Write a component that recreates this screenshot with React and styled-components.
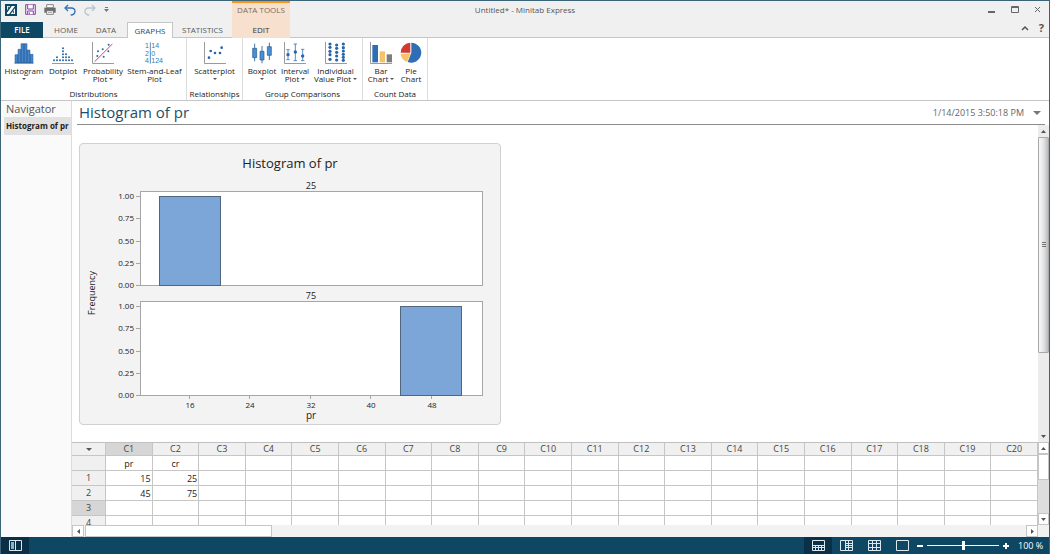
import React, { useState } from 'react';
import styled, { createGlobalStyle, css } from 'styled-components';

const GlobalStyle = createGlobalStyle`
  * {
    box-sizing: border-box;
  }

  body {
    margin: 0;
    font-family: 'Open Sans', 'Noto Sans', sans-serif;
    font-size: 9px;
    color: #222;
  }

  button {
    margin: 0;
    padding: 0;
    border: none;
    background: none;
    color: inherit;
    font: inherit;
    cursor: pointer;
  }

  svg {
    display: block;
  }
`;

const Window = styled.div`
  min-height: 100vh;
  display: flex;
  flex-direction: column;
  border: 1px solid #3c6478;
  border-bottom: none;
  background: white;
`;

const Header = styled.header`
  background: #f0f0f0;
`;

const TitleBar = styled.div`
  height: 21px;
  display: grid;
  grid-template-columns: 289px 1fr 289px;
`;

const TitleStart = styled.div`
  display: flex;
  justify-content: space-between;
`;

const QuickAccess = styled.div`
  display: flex;
  align-items: center;
  gap: 8px;
  padding: 0 4px 4px;
`;

const ContextLabel = styled.div`
  width: 58px;
  border-top: 2px solid #f7931e;
  background: #f8e0cf;
  color: #7d6a58;
  font-size: 8px;
  line-height: 14px;
  text-align: center;
  white-space: nowrap;
`;

const WindowTitle = styled.div`
  font-size: 8px;
  line-height: 17px;
  color: #555;
  text-align: center;
`;

const WindowButtons = styled.div`
  display: flex;
  justify-content: flex-end;
  align-items: center;
  gap: 14px;
  padding: 0 7px 4px 0;
`;

const TabBar = styled.div`
  height: 16px;
  display: flex;
  border-bottom: 1px solid #c6c6c6;
`;

const tabVariants = {
  file: css`
    background: #0d4763;
    color: white;
    font-weight: 600;
  `,
  active: css`
    background: white;
    border: 1px solid #c6c6c6;
    border-bottom: none;
    line-height: 13px;
    color: #1c4f6b;
  `,
  context: css`
    background: #f8e0cf;
    color: #333;
  `
};

const Tab = styled.button`
  width: ${props => props.$width}px;
  height: 16px;
  margin-left: ${props => (props.$variant === 'active' ? 4 : 0)}px;
  font-size: 8px;
  line-height: 14px;
  color: #5a5a5a;
  ${props => tabVariants[props.$variant]}
`;

const TabBarEnd = styled.div`
  display: flex;
  align-items: center;
  gap: 10px;
  margin-left: auto;
  padding: 0 5px 3px 0;
  color: #555;
  font-size: 11px;
  font-weight: 700;
  line-height: 12px;
`;

const Ribbon = styled.div`
  height: 63px;
  display: flex;
  border-bottom: 1px solid #c6c6c6;
  background: white;
`;

const Group = styled.section`
  display: flex;
  flex-direction: column;
  justify-content: space-between;
  padding: 4px 2px 0;
  border-right: 1px solid #dcdcdc;
`;

const GroupTools = styled.div`
  display: flex;
  justify-content: center;
`;

const GroupLabel = styled.div`
  font-size: 8px;
  line-height: 13px;
  text-align: center;
  white-space: nowrap;
`;

const ToolButton = styled.button`
  width: ${props => props.$width}px;
  display: flex;
  flex-direction: column;
  align-items: center;
  font-size: 8px;
  line-height: 8px;
  white-space: nowrap;
`;

const ToolLabel = styled.span`
  margin-top: 3px;
`;

const LabelLine = styled.span`
  height: 8px;
  display: flex;
  justify-content: center;
  align-items: center;
  gap: 2px;
`;

const Caret = styled.span`
  border: ${props => props.$size || 2}px solid transparent;
  border-top-color: ${props => props.$color || '#555'};
  border-bottom: none;
`;

const Workspace = styled.div`
  flex: 1;
  display: flex;
  min-height: 0;
`;

const Navigator = styled.nav`
  flex: 0 0 71px;
  border-right: 1px solid #dcdcdc;
  background: #fafafa;
`;

const NavTitle = styled.div`
  padding-left: 5px;
  font-size: 11px;
  line-height: 16px;
  color: #555;
`;

const NavItem = styled.button`
  width: 67px;
  height: 18px;
  margin-left: 3px;
  padding: 0 0 2px 2px;
  background: #e1e1e1;
  font-size: 8px;
  font-weight: 700;
  text-align: left;
  white-space: nowrap;
`;

const Content = styled.main`
  flex: 1;
  min-width: 0;
  display: flex;
  flex-direction: column;
`;

const OutputHeader = styled.div`
  height: 24px;
  display: flex;
  justify-content: space-between;
  align-items: center;
  margin: 0 4px 0 5px;
  padding: 0 4px 0 2px;
  border-bottom: 1px solid #8c8c8c;
`;

const OutputTitle = styled.h1`
  margin: 0;
  font-size: 15px;
  font-weight: 400;
  line-height: 23px;
  color: #1c4f6b;
`;

const OutputDate = styled.button`
  display: flex;
  align-items: center;
  gap: 9px;
  font-size: 9px;
  color: #666;
`;

const OutputArea = styled.div`
  flex: 1;
  display: flex;
  justify-content: space-between;
`;

const GraphCard = styled.figure`
  align-self: flex-start;
  margin: 18px 7px 17px;
  border: 1px solid #d0d0d0;
  border-radius: 4px;
  background: #f3f3f3;
`;

const VerticalScroll = styled.div`
  flex: 0 0 11px;
  display: flex;
  flex-direction: column;
  background: ${props => props.$track || '#ececec'};
`;

const ScrollButton = styled.button`
  flex: 0 0 12px;
  display: flex;
  justify-content: center;
  align-items: center;
  border: ${props => (props.$framed ? '1px solid #c6c6c6' : 'none')};
  background: ${props => (props.$framed ? 'white' : 'none')};
`;

const OutputThumb = styled.div`
  flex: 0 0 68%;
  display: flex;
  justify-content: center;
  align-items: center;
  margin-bottom: auto;
  border: 1px solid #a8a8a8;
  border-radius: 1px;
  background: linear-gradient(to right, #f8f8f8, #e4e4e4 50%, #b8bcc0);
`;

const Grip = styled.div`
  width: 4px;
  height: 5px;
  background: repeating-linear-gradient(#777 0 1px, transparent 1px 2px);
`;

const Worksheet = styled.section`
  display: grid;
  grid-template-columns: 1fr 11px;
  grid-template-rows: 83px 12px;
`;

const SheetClip = styled.div`
  overflow: hidden;
`;

const SheetTable = styled.table`
  width: 100%;
  table-layout: fixed;
  border-collapse: separate;
  border-spacing: 0;
  border-top: 1px solid #c0c0c0;
  font-size: 9px;
`;

const cellBase = css`
  height: 15px;
  padding: 0;
  border-right: 1px solid #c6c6c6;
  border-bottom: 1px solid #c6c6c6;
  line-height: 13px;
`;

const HeadCell = styled.th`
  ${cellBase}
  width: ${props => (props.$corner ? '34px' : 'auto')};
  height: ${props => (props.scope === 'col' ? 13 : 15)}px;
  background: ${props => (props.$selected ? '#d6d6d6' : '#f0f0f0')};
  color: #444;
  font-weight: 400;
  line-height: 12px;
`;

const Cell = styled.td`
  ${cellBase}
  padding-right: ${props => (props.$name ? 0 : 1)}px;
  text-align: ${props => (props.$name ? 'center' : 'right')};
`;

const CornerButton = styled.button`
  width: 100%;
  display: flex;
  justify-content: center;
`;

const SheetThumb = styled.div`
  height: 26px;
  margin-bottom: auto;
  border: 1px solid #c6c6c6;
  background: white;
`;

const HorizontalScroll = styled.div`
  display: flex;
  background: #f2f2f2;
`;

const HorizontalThumb = styled.div`
  flex: 0 0 187px;
  margin: 0 auto 0 1px;
  border: 1px solid #c6c6c6;
  background: white;
`;

const ScrollCorner = styled.div`
  background: #f2f2f2;
`;

const StatusBar = styled.footer`
  height: 17px;
  display: flex;
  justify-content: space-between;
  background: #0d4763;
  color: white;
`;

const StatusGroup = styled.div`
  display: flex;
  align-items: center;
`;

const ViewButton = styled.button`
  width: 28px;
  height: 17px;
  display: flex;
  justify-content: center;
  align-items: center;
  background: ${props => (props.$active ? '#0a3048' : 'none')};
`;

const ZoomStep = styled.button`
  width: 8px;
  height: 17px;
  display: flex;
  justify-content: center;
  align-items: center;
`;

const ZoomSlider = styled.input`
  width: 72px;
  height: 9px;
  margin: 0 3px;
  appearance: none;
  background: linear-gradient(white, white) center / 100% 1px no-repeat;

  &::-webkit-slider-thumb {
    appearance: none;
    width: 3px;
    height: 9px;
    background: white;
  }
`;

const ZoomValue = styled.span`
  width: 39px;
  padding-left: 8px;
  font-size: 9px;
  white-space: nowrap;
`;

const BLUE = '#3a76b8';
const DARK = '#24588f';
const AXIS = '#9a9a9a';

const Axes = () => <path d="M1.5 0V64.5H66" fill="none" stroke={AXIS} strokeWidth="3" />;

const Dots = ({ points, r = 3 }) =>
  points.map(([x, y]) => <circle key={`${x}-${y}`} cx={x} cy={y} r={r} fill="#2865ab" />);

const ToolIcon = ({ children }) => (
  <svg width="22" height="22" viewBox="0 0 66 66">
    {children}
  </svg>
);

const HistogramIcon = () => (
  <ToolIcon>
    <g fill="#4585cb" stroke={DARK} strokeWidth="1.5">
      <path d="M6 38h9v25H6zM15 22h9v41h-9zM24 5h9v58h-9zM33 5h9v58h-9zM42 24h9v39h-9zM51 37h9v26h-9z" />
    </g>
    <path d="M4 63.5H62" stroke={DARK} strokeWidth="2" />
  </ToolIcon>
);

const DotplotIcon = () => (
  <ToolIcon>
    <Dots
      points={[
        [6, 55], [15, 55], [24, 55], [33, 55], [42, 55], [51, 55], [60, 55],
        [15, 46], [33, 46], [42, 46], [51, 46], [33, 37], [42, 37], [33, 28], [33, 19]
      ]}
    />
    <path d="M0 64.5H66" stroke={AXIS} strokeWidth="3" />
  </ToolIcon>
);

const ProbabilityIcon = () => (
  <ToolIcon>
    <Axes />
    <path d="M8 59L61 6" stroke="#d9435a" strokeWidth="3" />
    <Dots points={[[16, 42], [18, 28], [35, 44], [32, 22], [49, 28], [50, 8]]} />
  </ToolIcon>
);

const StemIcon = () => (
  <ToolIcon>
    <g fill={BLUE} fontSize="21" fontFamily="Liberation Sans, sans-serif">
      <text x="15" y="19" textAnchor="end">1</text>
      <text x="15" y="41" textAnchor="end">2</text>
      <text x="15" y="62" textAnchor="end">4</text>
      <text x="22" y="19">14</text>
      <text x="22" y="41">0</text>
      <text x="22" y="62">124</text>
    </g>
    <path d="M19 1V65" stroke={BLUE} strokeWidth="2.5" />
  </ToolIcon>
);

const ScatterIcon = () => (
  <ToolIcon>
    <Axes />
    <Dots r={4} points={[[15, 47], [20, 27], [33, 33], [48, 33], [53, 17]]} />
  </ToolIcon>
);

const BoxplotIcon = () => (
  <ToolIcon>
    <path d="M11 5V58M33 12V64M55 2V54" stroke={DARK} strokeWidth="2.5" />
    <g fill="#4a8fd6" stroke={DARK} strokeWidth="2">
      <path d="M5 19h12v28H5zM27 28h12v26H27zM49 14h12v26H49z" />
    </g>
  </ToolIcon>
);

const IntervalIcon = () => (
  <ToolIcon>
    <Axes />
    <path
      d="M12 23V53M7 23H17M7 53H17M34 6V56M29 6H39M29 56H39M56 22V56M51 22H61M51 56H61"
      stroke={BLUE}
      strokeWidth="2.5"
    />
    <Dots r={5} points={[[12, 38], [34, 30], [56, 42]]} />
  </ToolIcon>
);

const IndividualIcon = () => (
  <ToolIcon>
    <Axes />
    <Dots
      r={4.8}
      points={[
        [15, 6], [15, 16], [15, 28], [15, 38], [15, 52],
        [35, 9], [35, 19], [35, 31], [35, 42], [35, 54],
        [55, 6], [55, 17], [55, 27], [55, 37], [55, 46], [55, 55]
      ]}
    />
  </ToolIcon>
);

const BarIcon = () => (
  <ToolIcon>
    <Axes />
    <path d="M7 9h17v52H7z" fill="#2f6eb5" />
    <path d="M29 28h16v33H29z" fill="#f6c36b" />
    <path d="M50 37h16v24H50z" fill="#7d7d7d" />
  </ToolIcon>
);

const PieIcon = () => (
  <ToolIcon>
    <path d="M34 32V2A30 30 0 1 1 23 60Z" fill="#2f6eb5" />
    <path d="M32 34L21 60A30 30 0 0 1 2 36Z" fill="#f6c36b" />
    <path d="M31 32H2A30 30 0 0 1 31 2Z" fill="#cf3a34" />
  </ToolIcon>
);

const AppLogo = () => (
  <svg width="12" height="12" viewBox="0 0 36 36">
    <path d="M0 0H36V36H0z" fill="#0d4763" />
    <path d="M6 6H30V30H6z" fill="white" />
    <path d="M5 24L19 5M14 31L31 8" stroke="#0d4763" strokeWidth="4" />
    <path d="M10 8v8M25 20v8" stroke="#0d4763" strokeWidth="3" />
  </svg>
);

const SaveIcon = () => (
  <svg width="11" height="11" viewBox="0 0 33 33" fill="none" stroke="#83479c" strokeWidth="3">
    <path d="M2 2H31V31H2z" fill="#eee3f3" />
    <path d="M8 2V15H25V2M8 31V21H25V31" fill="white" />
    <path d="M13 25V31" />
  </svg>
);

const PrintIcon = () => (
  <svg width="12" height="11" viewBox="0 0 36 33">
    <path d="M1 11H35V26H1z" fill="#6c6c6c" />
    <path d="M8 2H28V11H8zM8 20H28V31H8z" fill="white" stroke="#6c6c6c" strokeWidth="2.5" />
    <path d="M12 25H24" stroke="#6c6c6c" strokeWidth="2" />
  </svg>
);

const UndoIcon = ({ flipped }) => (
  <svg width="12" height="12" viewBox="0 0 36 36">
    <g
      transform={flipped ? 'matrix(-1 0 0 1 36 0)' : undefined}
      fill="none"
      stroke={flipped ? '#b9c4cd' : '#2f72b8'}
      strokeWidth="4"
    >
      <path d="M12 3L3 12L12 21" />
      <path d="M4 12H22C37 12 37 32 20 33" />
    </g>
  </svg>
);

const CustomizeIcon = () => (
  <svg width="5" height="6" viewBox="0 0 5 6" fill="#777">
    <path d="M1 0H4V1H1zM0 2H5L2.5 5z" />
  </svg>
);

const WindowGlyph = ({ d }) => (
  <svg width="9" height="9" viewBox="0 0 9 9" fill="none" stroke="#666">
    <path d={d} />
  </svg>
);

const Arrow = ({ d }) => (
  <svg width="5" height="5" viewBox="0 0 5 5" fill="#555">
    <path d={d} />
  </svg>
);

const ARROWS = {
  up: 'M0 4H5L2.5 1z',
  down: 'M0 1H5L2.5 4z',
  left: 'M4 0V5L1 2.5z',
  right: 'M1 0V5L4 2.5z'
};

const StatusIcon = ({ children }) => (
  <svg width="13" height="11" viewBox="0 0 13 11" fill="none" stroke="#dce8ee">
    <path d="M.5 .5H12.5V10.5H.5z" />
    {children}
  </svg>
);

const panels = [
  { label: '25', top: 47, bar: 80 },
  { label: '75', top: 157, bar: 321 }
];

const yTicks = ['1.00', '0.75', '0.50', '0.25', '0.00'];
const xTicks = [16, 24, 32, 40, 48];

const HistogramChart = () => (
  <svg width="420" height="280" viewBox="0 0 420 280" fill="#222" fontSize="8">
    <text x="210" y="24" fontSize="13" textAnchor="middle">Histogram of pr</text>
    <text fontSize="9" textAnchor="middle" transform="translate(15 149) rotate(-90)">
      Frequency
    </text>
    {panels.map(panel => (
      <g key={panel.label}>
        <text x="231" y={panel.top - 2} fontSize="9" textAnchor="middle">{panel.label}</text>
        <rect x="60.5" y={panel.top + 0.5} width="342" height="94" fill="white" stroke="#a6a6a6" />
        <rect
          x={panel.bar - 0.5}
          y={panel.top + 5.5}
          width="61"
          height="89"
          fill="#7ca6d8"
          stroke="#51657c"
        />
        {yTicks.map((tick, i) => {
          const y = panel.top + 5 + Math.round(i * 22.25);
          return (
            <g key={tick}>
              <path d={`M56 ${y + 0.5}H60`} stroke="#a6a6a6" />
              <text x="54" y={y + 3} textAnchor="end">{tick}</text>
            </g>
          );
        })}
      </g>
    ))}
    {xTicks.map((tick, i) => {
      const x = 110 + Math.round(i * 60.4);
      return (
        <g key={tick}>
          <path d={`M${x - 0.5} 252V255`} stroke="#a6a6a6" />
          <text x={x} y="264" textAnchor="middle">{tick}</text>
        </g>
      );
    })}
    <text x="231" y="275" fontSize="10" textAnchor="middle">pr</text>
  </svg>
);

const tabs = [
  { name: 'FILE', width: 42, variant: 'file' },
  { name: 'HOME', width: 46 },
  { name: 'DATA', width: 34 },
  { name: 'GRAPHS', width: 46, variant: 'active' },
  { name: 'STATISTICS', width: 59 },
  { name: 'EDIT', width: 58, variant: 'context' }
];

const groups = [
  {
    name: 'Distributions',
    tools: [
      { lines: ['Histogram', ''], menu: true, width: 42, Icon: HistogramIcon },
      { lines: ['Dotplot', ''], menu: true, width: 36, Icon: DotplotIcon },
      { lines: ['Probability', 'Plot'], menu: true, width: 44, Icon: ProbabilityIcon },
      { lines: ['Stem-and-Leaf', 'Plot'], width: 59, Icon: StemIcon }
    ]
  },
  {
    name: 'Relationships',
    tools: [{ lines: ['Scatterplot', ''], menu: true, width: 51, Icon: ScatterIcon }]
  },
  {
    name: 'Group Comparisons',
    tools: [
      { lines: ['Boxplot', ''], menu: true, width: 34, Icon: BoxplotIcon },
      { lines: ['Interval', 'Plot'], menu: true, width: 32, Icon: IntervalIcon },
      { lines: ['Individual', 'Value Plot'], menu: true, width: 49, Icon: IndividualIcon }
    ]
  },
  {
    name: 'Count Data',
    tools: [
      { lines: ['Bar', 'Chart'], menu: true, width: 32, Icon: BarIcon },
      { lines: ['Pie', 'Chart'], width: 28, Icon: PieIcon }
    ]
  }
];

const columns = Array.from({ length: 20 }, (_, i) => `C${i + 1}`);

const rows = [
  { label: '', values: ['pr', 'cr'], name: true },
  { label: '1', values: ['15', '25'] },
  { label: '2', values: ['45', '75'] },
  { label: '3', values: [], selected: true },
  { label: '4', values: [] }
];

const RibbonGroup = ({ name, tools }) => (
  <Group>
    <GroupTools>
      {tools.map(({ lines, menu, width, Icon }) => (
        <ToolButton key={lines[0]} $width={width}>
          <Icon />
          <ToolLabel>
            <LabelLine>{lines[0]}</LabelLine>
            <LabelLine>
              {lines[1]}
              {menu ? <Caret /> : null}
            </LabelLine>
          </ToolLabel>
        </ToolButton>
      ))}
    </GroupTools>
    <GroupLabel>{name}</GroupLabel>
  </Group>
);

const DataSheet = () => (
  <SheetTable>
    <thead>
      <tr>
        <HeadCell scope="col" $corner>
          <CornerButton aria-label="Select all">
            <Caret $size={3} />
          </CornerButton>
        </HeadCell>
        {columns.map(column => (
          <HeadCell key={column} scope="col" $selected={column === 'C1'}>
            {column}
          </HeadCell>
        ))}
      </tr>
    </thead>
    <tbody>
      {rows.map(row => (
        <tr key={row.label}>
          <HeadCell scope="row" $selected={row.selected}>{row.label}</HeadCell>
          {columns.map((column, i) => (
            <Cell key={column} $name={row.name}>{row.values[i]}</Cell>
          ))}
        </tr>
      ))}
    </tbody>
  </SheetTable>
);

const App = () => {
  const [zoom, setZoom] = useState(100);

  return (
    <>
      <GlobalStyle />
      <Window>
        <Header>
          <TitleBar>
            <TitleStart>
              <QuickAccess>
                <AppLogo />
                <button aria-label="Save"><SaveIcon /></button>
                <button aria-label="Print"><PrintIcon /></button>
                <button aria-label="Undo"><UndoIcon /></button>
                <button aria-label="Redo"><UndoIcon flipped /></button>
                <button aria-label="Customize toolbar"><CustomizeIcon /></button>
              </QuickAccess>
              <ContextLabel>DATA TOOLS</ContextLabel>
            </TitleStart>
            <WindowTitle>Untitled* - Minitab Express</WindowTitle>
            <WindowButtons>
              <button aria-label="Minimize"><WindowGlyph d="M1 7.5H8M1 6.5H8" /></button>
              <button aria-label="Maximize"><WindowGlyph d="M1.5 1.5H8.5V7.5H1.5zM1 2.5H9" /></button>
              <button aria-label="Close"><WindowGlyph d="M2 2L7 7M7 2L2 7" /></button>
            </WindowButtons>
          </TitleBar>
          <TabBar>
            {tabs.map(tab => (
              <Tab key={tab.name} $width={tab.width} $variant={tab.variant}>{tab.name}</Tab>
            ))}
            <TabBarEnd>
              <button aria-label="Collapse ribbon">
                <svg width="8" height="6" viewBox="0 0 8 6" fill="none" stroke="#555" strokeWidth="1.5">
                  <path d="M1 5L4 2L7 5" />
                </svg>
              </button>
              <button>?</button>
            </TabBarEnd>
          </TabBar>
        </Header>
        <Ribbon>
          {groups.map(group => (
            <RibbonGroup key={group.name} {...group} />
          ))}
        </Ribbon>
        <Workspace>
          <Navigator>
            <NavTitle>Navigator</NavTitle>
            <NavItem>Histogram of pr</NavItem>
          </Navigator>
          <Content>
            <OutputHeader>
              <OutputTitle>Histogram of pr</OutputTitle>
              <OutputDate>
                1/14/2015 3:50:18 PM
                <Caret $size={4} $color="#777" />
              </OutputDate>
            </OutputHeader>
            <OutputArea>
              <GraphCard>
                <HistogramChart />
              </GraphCard>
              <VerticalScroll>
                <ScrollButton aria-label="Scroll up"><Arrow d={ARROWS.up} /></ScrollButton>
                <OutputThumb><Grip /></OutputThumb>
                <ScrollButton aria-label="Scroll down"><Arrow d={ARROWS.down} /></ScrollButton>
              </VerticalScroll>
            </OutputArea>
            <Worksheet>
              <SheetClip>
                <DataSheet />
              </SheetClip>
              <VerticalScroll $track="#dedede">
                <ScrollButton $framed aria-label="Scroll sheet up"><Arrow d={ARROWS.up} /></ScrollButton>
                <SheetThumb />
                <ScrollButton $framed aria-label="Scroll sheet down"><Arrow d={ARROWS.down} /></ScrollButton>
              </VerticalScroll>
              <HorizontalScroll>
                <ScrollButton $framed aria-label="Scroll sheet left"><Arrow d={ARROWS.left} /></ScrollButton>
                <HorizontalThumb />
                <ScrollButton $framed aria-label="Scroll sheet right"><Arrow d={ARROWS.right} /></ScrollButton>
              </HorizontalScroll>
              <ScrollCorner />
            </Worksheet>
          </Content>
        </Workspace>
        <StatusBar>
          <ViewButton $active aria-label="Toggle navigator">
            <StatusIcon>
              <path d="M2 2H5V9H2z" fill="#8fb0c0" stroke="none" />
              <path d="M6.5 1V10" />
            </StatusIcon>
          </ViewButton>
          <StatusGroup>
            <ViewButton $active aria-label="Output and sheet">
              <StatusIcon>
                <path d="M1 5.5H12M3.5 6V10M6.5 6V10M9.5 6V10M1 7.5H12" />
              </StatusIcon>
            </ViewButton>
            <ViewButton aria-label="Side by side">
              <StatusIcon>
                <path d="M5.5 1V10M8.5 1V10M6 3.5H12M6 5.5H12M6 7.5H12" />
              </StatusIcon>
            </ViewButton>
            <ViewButton aria-label="Sheet only">
              <StatusIcon>
                <path d="M4.5 1V10M8.5 1V10M1 3.5H12M1 7.5H12" />
              </StatusIcon>
            </ViewButton>
            <ViewButton aria-label="Output only">
              <StatusIcon />
            </ViewButton>
            <ZoomStep aria-label="Zoom out" onClick={() => setZoom(Math.max(0, zoom - 10))}>
              <svg width="6" height="6" viewBox="0 0 6 6" fill="white">
                <path d="M0 2H6V4H0z" />
              </svg>
            </ZoomStep>
            <ZoomSlider
              type="range"
              aria-label="Zoom"
              min="0"
              max="200"
              value={zoom}
              onChange={event => setZoom(Number(event.target.value))}
            />
            <ZoomStep aria-label="Zoom in" onClick={() => setZoom(Math.min(200, zoom + 10))}>
              <svg width="6" height="6" viewBox="0 0 6 6" fill="white">
                <path d="M0 2H6V4H0zM2 0H4V6H2z" />
              </svg>
            </ZoomStep>
            <ZoomValue>{zoom} %</ZoomValue>
          </StatusGroup>
        </StatusBar>
      </Window>
    </>
  );
};

export default App;
